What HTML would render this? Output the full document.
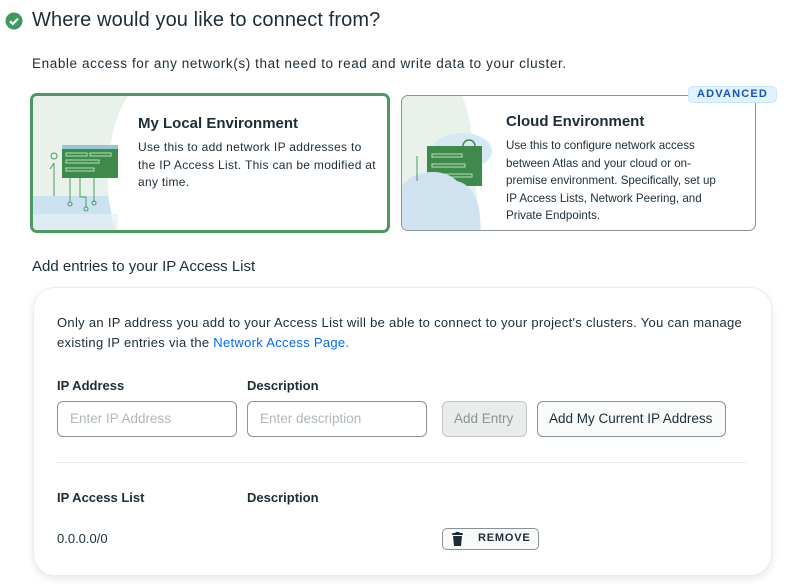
<!DOCTYPE html><html><head><style>
*{margin:0;padding:0;box-sizing:border-box}
body{width:798px;height:585px;background:#fff;font-family:"Liberation Sans",sans-serif;color:#1c2d38;position:relative;overflow:hidden}
.a{position:absolute;white-space:nowrap}
.card{position:absolute;border-radius:7px;overflow:hidden;background:#fff}
.t{font-weight:bold;font-size:15px}
.d{font-size:11.6px;line-height:17.6px;color:#1c2d38}
.lbl{font-weight:bold;font-size:13px}
.inp{position:absolute;border:1px solid #889397;border-radius:6px;height:36px;font-size:13.5px;color:#b0b8bc;padding:9px 12px}
.btn{position:absolute;border:1px solid #889397;border-radius:6px;height:36px;font-size:13.5px;padding:9px 11px;background:#f9fbfa}
</style></head><body>
<svg class="a" style="left:5px;top:12px" width="18" height="18" viewBox="0 0 18 18"><circle cx="9" cy="9" r="8.5" fill="#3d9a5a"/><path d="M5 9.2l2.8 2.8L13 6.6" stroke="#fff" stroke-width="2.2" fill="none"/></svg>
<div class="a" style="left:32px;top:9px;font-size:20px;letter-spacing:.1px">Where would you like to connect from?</div>
<div class="a" style="left:32px;top:56px;font-size:13.5px;letter-spacing:.6px">Enable access for any network(s) that need to read and write data to your cluster.</div>

<div class="card" style="left:30px;top:93px;width:360px;height:140px;border:3px solid #4a9c5e">
<svg class="a" style="left:0;top:0" width="110" height="140"><path d="M0 0H95C75 30 70 80 80 137H0Z" fill="#e8f1ea"/><path d="M0 100H75C78 115 80 130 85 137H0Z" fill="#cde2ef"/><path d="M0 118H85V137H0Z" fill="#e5eff6" opacity=".7"/>
<rect x="29" y="49" width="56" height="33" fill="#3d8a4b"/><rect x="29" y="49" width="56" height="4" fill="#9ac7d8"/>
<rect x="33" y="57" width="21" height="3" fill="none" stroke="#b8e0c0"/><rect x="57" y="57" width="21" height="3" fill="none" stroke="#b8e0c0"/><rect x="33" y="64" width="33" height="3" fill="none" stroke="#b8e0c0"/><rect x="33" y="72" width="28" height="3" fill="none" stroke="#b8e0c0"/>
<path d="M21 67V100M37 82V106M47 82V101H53V111M61 82V106M21 67l-4 6" stroke="#4a9c5e" fill="none"/><circle cx="21" cy="60" r="3" fill="none" stroke="#4a9c5e"/><circle cx="37" cy="108" r="2" fill="none" stroke="#4a9c5e"/><circle cx="53" cy="113" r="2" fill="none" stroke="#4a9c5e"/><circle cx="61" cy="107" r="2" fill="none" stroke="#4a9c5e"/></svg>
<div class="a t" style="left:105px;top:19px">My Local Environment</div>
<div class="a d" style="left:105px;top:43px;font-size:12px;letter-spacing:.3px">Use this to add network IP addresses to<br>the IP Access List. This can be modified at<br>any time.</div>
</div>

<div class="card" style="left:401px;top:95px;width:355px;height:136px;border:1px solid #889397">
<svg class="a" style="left:0;top:0" width="100" height="136"><path d="M0 0H60C75 30 70 90 80 136H0Z" fill="#e8f1ea"/>
<ellipse cx="60" cy="55" rx="30" ry="18" fill="#d6e8f3"/>
<rect x="25" y="50" width="55" height="40" fill="#3d8a4b"/><rect x="30" y="58" width="30" height="3" fill="none" stroke="#b8e0c0"/><rect x="30" y="68" width="33" height="3" fill="none" stroke="#b8e0c0"/><rect x="30" y="78" width="40" height="3" fill="none" stroke="#b8e0c0"/>
<circle cx="67" cy="50" r="6" fill="none" stroke="#3d8a4b" stroke-width="1.5"/>
<path d="M0 90C10 75 40 70 55 85C75 90 80 115 78 136H0Z" fill="#cfe2ef"/><path d="M15 60V85" stroke="#4a9c5e"/></svg>
<div class="a t" style="left:104px;top:17px">Cloud Environment</div>
<div class="a d" style="left:104px;top:41px">Use this to configure network access<br>between Atlas and your cloud or on-<br>premise environment. Specifically, set up<br>IP Access Lists, Network Peering, and<br>Private Endpoints.</div>
</div>
<div class="a" style="left:688px;top:86px;width:89px;height:17px;background:#e3f3fd;border:1px solid #c3e7fe;border-radius:5px;color:#1254b7;font-size:11px;font-weight:bold;letter-spacing:1.2px;text-align:center;line-height:15px">ADVANCED</div>

<div class="a" style="left:32px;top:258px;font-size:15px">Add entries to your IP Access List</div>
<div class="a" style="left:33px;top:287px;width:739px;height:289px;border:1px solid #e8edeb;border-radius:22px;box-shadow:0 3px 8px rgba(0,30,43,.1)"></div>
<div class="a" style="left:57px;top:313px;font-size:13px;line-height:20px;letter-spacing:.3px">Only an IP address you add to your Access List will be able to connect to your project's clusters. You can manage<br>existing IP entries via the <span style="color:#016bf8">Network Access Page.</span></div>
<div class="a lbl" style="left:57px;top:378px">IP Address</div>
<div class="a lbl" style="left:247px;top:378px">Description</div>
<div class="inp" style="left:57px;top:401px;width:180px">Enter IP Address</div>
<div class="inp" style="left:247px;top:401px;width:180px">Enter description</div>
<div class="btn" style="left:442px;top:401px;width:85px;background:#e8edeb;border-color:#c1c7c6;color:#889397">Add Entry</div>
<div class="btn" style="left:537px;top:401px;width:189px">Add My Current IP Address</div>
<div class="a" style="left:57px;top:462px;width:690px;height:1px;background:#e8edeb"></div>
<div class="a lbl" style="left:57px;top:490px">IP Access List</div>
<div class="a lbl" style="left:247px;top:490px">Description</div>
<div class="a" style="left:57px;top:531px;font-size:13px">0.0.0.0/0</div>
<div class="a" style="left:442px;top:528px;width:97px;height:22px;border:1px solid #889397;border-radius:5px;background:#f9fbfa"></div>
<svg class="a" style="left:451px;top:532px" width="13" height="14" viewBox="0 0 13 14"><rect x="1" y="1" width="11" height="2" rx="1" fill="#1c2d38"/><rect x="4.5" y="0" width="4" height="2" fill="#1c2d38"/><path d="M2 4H11L10 14H3Z" fill="#1c2d38"/></svg>
<div class="a" style="left:478px;top:532px;font-size:11px;font-weight:bold;letter-spacing:.8px">REMOVE</div>
</body></html>
